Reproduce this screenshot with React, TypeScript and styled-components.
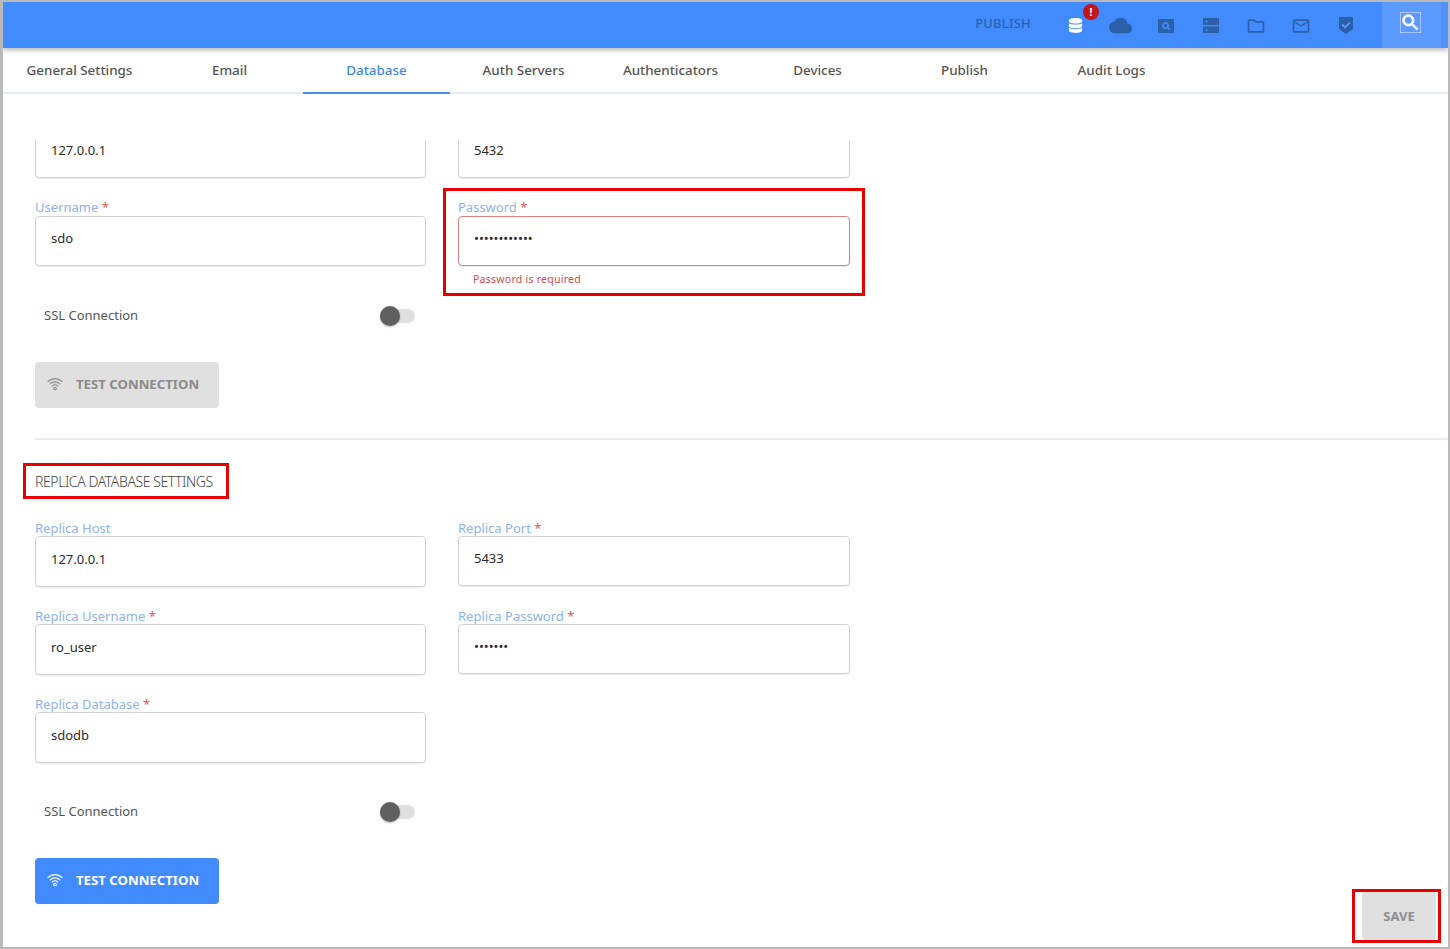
import React from 'react';
import styled, {createGlobalStyle} from 'styled-components';
import {FaDatabase} from 'react-icons/fa';
import {MdCloud, MdMailOutline, MdOutlineFolder, MdSearch} from 'react-icons/md';

const tabs = ['General Settings', 'Email', 'Database', 'Auth Servers', 'Authenticators', 'Devices', 'Publish', 'Audit Logs']

const SearchBoxIcon = () => (
    <svg width="18" height="16" viewBox="0 0 18 16">
        <path fill="currentColor" fillRule="evenodd" d="M2 1h14a1 1 0 0 1 1 1v12a1 1 0 0 1-1 1H2a1 1 0 0 1-1-1V2a1 1 0 0 1 1-1zm6.500 3a3.500 3.500 0 1 0 1.900 6.400l2.200 2 1.100-1.200-2.100-2A3.500 3.500 0 0 0 8.500 4zm0 1.700a1.800 1.800 0 1 1 0 3.600 1.800 1.800 0 0 1 0-3.600z"/>
    </svg>
)

const ServerIcon = () => (
    <svg width="18" height="17" viewBox="0 0 18 17">
        <path fill="currentColor" fillRule="evenodd" d="M1 1h16v7H1zm0 8.500h16V16H1zM3.500 3.500v2h2v-2zm0 8.500v2h2v-2z"/>
    </svg>
)

const ShieldIcon = () => (
    <svg width="16" height="19" viewBox="0 0 16 19">
        <path fill="currentColor" d="M1 1h14v12l-7 5-7-5z"/>
        <path fill="none" stroke="#5f9bff" strokeWidth="1.800" d="M4.200 8.500l2.800 2.800 5-5"/>
    </svg>
)

const WifiIcon = () => (
    <svg width="16" height="14" viewBox="0 0 16 14" fill="none" stroke="currentColor" strokeWidth="1.100" strokeLinecap="round">
        <path d="M1 4.500a10 10 0 0 1 14 0"/>
        <path d="M3.200 6.800a7 7 0 0 1 9.600 0"/>
        <path d="M5.300 9a4 4 0 0 1 5.400 0"/>
        <circle cx="8" cy="11.500" r="1.300"/>
    </svg>
)

interface FieldProps {
    label?: string
    value: string
    required?: boolean
    password?: boolean
    tall?: boolean
    error?: string
    children?: React.ReactNode
}

const Field: React.FC<FieldProps> = ({label, value, required, password, tall, error, children}) => (
    <FieldBox>
        <FieldLabel>{label}{required && <Star> *</Star>}</FieldLabel>
        <ValueInput type={password ? 'password' : 'text'} value={value} readOnly $tall={tall} $error={!!error}/>
        {error && <ErrorText>{error}</ErrorText>}
        {children}
    </FieldBox>
)

const SslRow = () => (
    <SslLine>
        <span>SSL Connection</span>
        <Toggle><Knob/></Toggle>
    </SslLine>
)

const App: React.FC = () => {
    return (
        <Frame>
            <GlobalStyle/>
            <Header>
                <PublishLabel>PUBLISH</PublishLabel>
                <IconCell $active>
                    <FaDatabase size={15}/>
                    <Badge>!</Badge>
                </IconCell>
                <IconCell><MdCloud size={23}/></IconCell>
                <IconCell><SearchBoxIcon/></IconCell>
                <IconCell><ServerIcon/></IconCell>
                <IconCell><MdOutlineFolder size={20}/></IconCell>
                <IconCell><MdMailOutline size={20}/></IconCell>
                <IconCell><ShieldIcon/></IconCell>
                <SearchCell><BoldSearch size={21}/></SearchCell>
                <HeaderEdge/>
            </Header>
            <TabBar>
                {tabs.map((tab, i) => <Tab key={tab} $first={i === 0} $active={tab === 'Database'}>{tab}</Tab>)}
            </TabBar>
            <Scroller>
                {/* the top of this form is scrolled out of view, only the first inputs' lower part shows */}
                <FormGrid $scrolled>
                    <Field value="127.0.0.1"/>
                    <Field value="5432"/>
                    <Field label="Username" value="sdo" required/>
                    <Field label="Password" value="sdopassword1" required password error="Password is required">
                        <Highlight $left={-15} $top={10} $width={422} $height={108}/>
                    </Field>
                </FormGrid>
                <SslSpacer><SslRow/></SslSpacer>
                <TestButton $disabled>
                    <WifiIcon/>
                    TEST CONNECTION
                </TestButton>
                <Divider/>
                <SectionTitle>
                    REPLICA DATABASE SETTINGS
                    <Highlight $left={-12} $top={-3} $width={206} $height={36}/>
                </SectionTitle>
                <FormGrid $replica>
                    <Field label="Replica Host" value="127.0.0.1" tall/>
                    <Field label="Replica Port" value="5433" required/>
                    <Field label="Replica Username" value="ro_user" required tall/>
                    <Field label="Replica Password" value="ropass1" required password/>
                    <Field label="Replica Database" value="sdodb" required tall/>
                </FormGrid>
                <SslSpacer><SslRow/></SslSpacer>
                <BottomRow>
                    <TestButton>
                        <WifiIcon/>
                        TEST CONNECTION
                    </TestButton>
                    <SaveButton>
                        SAVE
                        <Highlight $left={-10} $top={-2} $width={89} $height={54}/>
                    </SaveButton>
                </BottomRow>
            </Scroller>
        </Frame>
    );
};

export default App;


const GlobalStyle = createGlobalStyle`
  html, body {
    margin: 0;
    padding: 0;
    background: #fff;
  }
  body {
    font-family: 'Noto Sans', 'Open Sans', sans-serif;
  }
`

const Frame = styled.div`
  box-sizing: border-box;
  width: 1450px;
  height: 949px;
  border: solid #b9b9b9;
  border-width: 2px 2px 2px 3px;
  display: flex;
  flex-direction: column;
  overflow: hidden;
  background: #fff;
`

const Header = styled.header`
  flex: none;
  height: 46px;
  background: #428bff;
  box-shadow: 0 2px 5px rgba(0, 0, 0, 0.3);
  display: flex;
  justify-content: flex-end;
  align-items: stretch;
  position: relative;
  z-index: 1;
`

const PublishLabel = styled.div`
  display: flex;
  align-items: center;
  margin-right: 22px;
  padding-bottom: 4px;
  font-size: 13px;
  font-weight: 500;
  letter-spacing: 0.2px;
  color: #2b62ad;
`

const IconCell = styled.div<{$active?: boolean}>`
  width: 45px;
  display: flex;
  align-items: center;
  justify-content: center;
  padding-top: 1px;
  box-sizing: border-box;
  position: relative;
  color: ${p => p.$active ? '#fff' : '#2b5fa8'};
`

const Badge = styled.span`
  position: absolute;
  left: 30px;
  top: 2px;
  width: 16px;
  height: 16px;
  border-radius: 50%;
  background: #c3151d;
  color: #fff;
  font-size: 10px;
  font-weight: 700;
  line-height: 16px;
  text-align: center;
`

const SearchCell = styled.div`
  margin-left: 14px;
  width: 59px;
  background: #5c9aff;
  color: #fff;
  display: flex;
  align-items: center;
  justify-content: center;
  padding: 0 2px 6px 0;
  box-sizing: border-box;
`

const BoldSearch = styled(MdSearch)`
  stroke: currentColor;
  stroke-width: 1;
`

const HeaderEdge = styled.div`
  width: 7px;
  background: #4f92ff;
`

const TabBar = styled.nav`
  flex: none;
  height: 46px;
  box-sizing: border-box;
  border-bottom: 2px solid #e6ebf4;
  display: flex;
`

const Tab = styled.div<{$first?: boolean; $active?: boolean}>`
  width: ${p => p.$first ? '153px' : '147px'};
  height: 46px;
  box-sizing: border-box;
  display: flex;
  align-items: center;
  justify-content: center;
  font-size: 13.4px;
  font-weight: 500;
  color: ${p => p.$active ? '#3f87e5' : '#555'};
  border-bottom: 2px solid ${p => p.$active ? '#4a8fe0' : 'transparent'};
`

const Scroller = styled.main`
  flex: 1;
  margin-top: 46px;
  padding: 0 12px 0 32px;
  overflow: hidden;
`

const FieldLabel = styled.label`
  height: 38px;
  display: flex;
  align-items: flex-end;
  white-space: pre;
  font-size: 13px;
  line-height: 18px;
  color: #8db3f0;
`

const FormGrid = styled.div<{$scrolled?: boolean; $replica?: boolean}>`
  display: grid;
  grid-template-columns: 391px 392px;
  grid-auto-rows: 88px;
  column-gap: 32px;
  margin-top: ${p => p.$scrolled ? '-50px' : '0'};
  ${FieldLabel} {
    line-height: ${p => p.$replica ? '16px' : '18px'};
  }
`

const FieldBox = styled.div`
  height: 88px;
  position: relative;
`

const Star = styled.span`
  color: #e05a5a;
`

const ValueInput = styled.input<{$tall?: boolean; $error?: boolean}>`
  display: block;
  box-sizing: border-box;
  width: 100%;
  height: ${p => p.$tall ? '51px' : '50px'};
  padding: 0 15px 6px;
  border: 1px solid ${p => p.$error ? '#d98080' : '#d2d2d2'};
  border-radius: 4px;
  box-shadow: 0 1px 1px rgba(0, 0, 0, 0.08);
  outline: none;
  font-family: 'Noto Sans', sans-serif;
  font-size: 13px;
  color: #2c2c2c;
`

const ErrorText = styled.div`
  margin: 6px 0 0 15px;
  font-size: 10.5px;
  line-height: 14px;
  letter-spacing: 0.25px;
  color: #d8474f;
`

const Highlight = styled.span<{$left: number; $top: number; $width: number; $height: number}>`
  position: absolute;
  left: ${p => p.$left}px;
  top: ${p => p.$top}px;
  width: ${p => p.$width}px;
  height: ${p => p.$height}px;
  box-sizing: border-box;
  border: 3px solid #e80000;
  pointer-events: none;
`

const SslSpacer = styled.div`
  margin-top: 29px;
`

const SslLine = styled.div`
  width: 391px;
  height: 40px;
  box-sizing: border-box;
  padding: 0 11px 0 9px;
  display: flex;
  align-items: center;
  justify-content: space-between;
  font-size: 13px;
  color: #555;
`

const Toggle = styled.div`
  width: 35px;
  height: 14px;
  margin-top: 2px;
  border-radius: 7px;
  background: #dfdfdf;
  position: relative;
`

const Knob = styled.span`
  position: absolute;
  left: 0;
  top: -3px;
  width: 20px;
  height: 20px;
  border-radius: 50%;
  background: #5f5f5f;
  box-shadow: 0 1px 2px rgba(0, 0, 0, 0.3);
`

const TestButton = styled.div<{$disabled?: boolean}>`
  width: 184px;
  height: 46px;
  margin-top: ${p => p.$disabled ? '27px' : '0'};
  box-sizing: border-box;
  padding: 0 0 2px 12px;
  display: flex;
  align-items: center;
  gap: 13px;
  border-radius: 4px;
  background: ${p => p.$disabled ? '#e0e0e0' : '#428bff'};
  color: ${p => p.$disabled ? '#8a8a8a' : '#fff'};
  font-size: 13.2px;
  font-weight: 700;
  white-space: nowrap;
`

const Divider = styled.hr`
  height: 2px;
  margin: 30px -12px 0 0;
  border: none;
  background: #e6ebf4;
`

const SectionTitle = styled.h3`
  position: relative;
  margin: 26px 0 0;
  height: 32px;
  line-height: 32px;
  font-size: 14px;
  font-weight: 300;
  letter-spacing: -0.42px;
  color: #444;
`

const BottomRow = styled.div`
  margin-top: 27px;
  display: flex;
  justify-content: space-between;
  align-items: flex-start;
`

const SaveButton = styled.div`
  position: relative;
  width: 74px;
  height: 49px;
  margin-top: 33px;
  display: flex;
  align-items: center;
  justify-content: center;
  border-radius: 4px;
  background: #e0e0e0;
  color: #8e8e8e;
  font-size: 13px;
  font-weight: 700;
`
